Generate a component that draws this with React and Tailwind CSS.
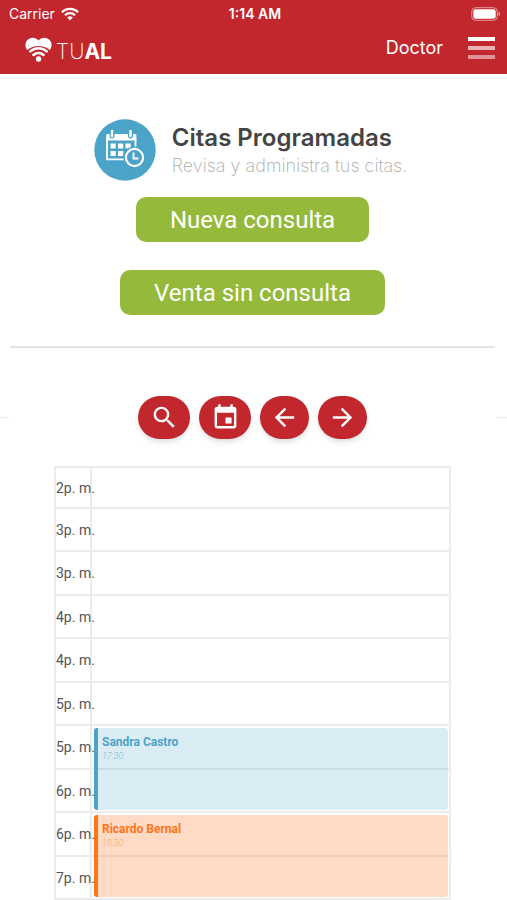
import React from "react";

const hours = ["2p. m.", "3p. m.", "3p. m.", "4p. m.", "4p. m.", "5p. m.", "5p. m.", "6p. m.", "6p. m.", "7p. m."];

const appointments = {
  6: { name: "Sandra Castro", time: "17:30", box: "border-[#4ba3c7] bg-[#4ba3c7]/20", title: "text-[#4ba3c7]", sub: "text-[#4ba3c7]/70" },
  8: { name: "Ricardo Bernal", time: "18:30", box: "border-[#ff7518] bg-[#ff6a13]/25", title: "text-[#ff7518]", sub: "text-[#ff7518]/60" },
};

const actions = [
  {
    label: "Buscar",
    size: "w-[52px]",
    path: "M15.5 14h-.79l-.28-.27A6.47 6.47 0 0 0 16 9.5 6.5 6.5 0 1 0 9.5 16c1.61 0 3.09-.59 4.23-1.57l.27.28v.79l5 4.99L20.49 19l-4.99-5zm-6 0C7.01 14 5 11.99 5 9.5S7.01 5 9.5 5 14 7.01 14 9.5 11.99 14 9.5 14z",
  },
  {
    label: "Calendario",
    size: "w-[52px]",
    path: "M17 12h-5v5h5v-5zM16 1v2H8V1H6v2H5c-1.11 0-1.99.9-1.99 2L3 19a2 2 0 0 0 2 2h14c1.1 0 2-.9 2-2V5c0-1.1-.9-2-2-2h-1V1h-2zm3 18H5V8h14v11z",
  },
  { label: "Anterior", size: "w-[49px]", path: "M20 11H7.83l5.59-5.59L12 4l-8 8 8 8 1.41-1.41L7.83 13H20v-2z" },
  { label: "Siguiente", size: "w-[49px]", path: "M12 4l-1.41 1.41L16.17 11H4v2h12.17l-5.58 5.59L12 20l8-8z" },
];

function WifiIcon() {
  return (
    <svg viewBox="0 0 18 14" className="h-[14px] w-[18px]" fill="none" stroke="white" strokeWidth="2.2" aria-hidden="true">
      <path d="M0.9 5.2a11.6 11.6 0 0 1 16.2 0" />
      <path d="M3.9 8.3a7.3 7.3 0 0 1 10.2 0" />
      <path d="M9 13.4 6.2 10.6a4 4 0 0 1 5.6 0z" fill="white" stroke="none" />
    </svg>
  );
}

function BatteryIcon() {
  return (
    <svg viewBox="0 0 30 14" className="h-[14px] w-[30px]" aria-hidden="true">
      <rect x="0.7" y="0.7" width="25.6" height="12.6" rx="3.8" fill="none" stroke="#e79a9d" strokeWidth="1" />
      <rect x="2.3" y="2.3" width="22.4" height="9.4" rx="2.3" fill="white" />
      <path d="M27.6 4.8v4.4c1-.4 1.6-1.2 1.6-2.2s-.6-1.8-1.6-2.2z" fill="#e79a9d" />
    </svg>
  );
}

function HeartLogo() {
  return (
    <svg viewBox="0 0 27 25" className="h-[25px] w-[27px]" aria-hidden="true">
      <path d="M2.3 13C-.3 10 0 5.500 2.200 3.200 5-.3 10.500-.2 13.500 3.400 16.500-.2 22-.3 24.800 3.200 27 5.500 27.300 10 24.700 13 18.500 7.600 8.500 7.600 2.300 13z" fill="white" />
      <g fill="none" stroke="white" strokeWidth="2.500" strokeLinecap="round">
        <path d="M5.300 14.400a12 12 0 0 1 16.400 0" />
        <path d="M8.400 18a7.500 7.500 0 0 1 10.200 0" />
      </g>
      <circle cx="13.500" cy="22" r="2.700" fill="white" />
    </svg>
  );
}

function AppointmentsIcon() {
  return (
    <svg viewBox="0 0 62 62" className="size-[62px] shrink-0" aria-hidden="true">
      <circle cx="31" cy="31" r="30.700" fill="#4ba3c7" />
      <path d="M13 20v20.300h20M41.500 20v8" fill="none" stroke="white" strokeWidth="1.800" strokeLinejoin="round" />
      <path d="M13.600 15h27.300a1.500 1.500 0 0 1 1.500 1.500v5H12.100v-5a1.500 1.500 0 0 1 1.500-1.500z" fill="white" />
      <g stroke="#4ba3c7" strokeWidth="5" strokeLinecap="round">
        <path d="M18 12.500v4.500M36.500 12.500v4.500" />
      </g>
      <g stroke="white" strokeWidth="2.400" strokeLinecap="round">
        <path d="M18 12v5M36.500 12v5" />
      </g>
      <g fill="white">
        <rect x="16.500" y="24.500" width="5.200" height="5" />
        <rect x="24" y="24.500" width="5.200" height="5" />
        <rect x="31.500" y="24.500" width="5.200" height="5" />
        <rect x="16.500" y="32" width="5.200" height="5" />
        <rect x="24" y="32" width="5.200" height="5" />
      </g>
      <circle cx="40.500" cy="38.500" r="11" fill="#4ba3c7" />
      <circle cx="40.500" cy="38.500" r="8.600" fill="none" stroke="white" strokeWidth="2.200" />
      <path d="M39.500 33.500v6h5" fill="none" stroke="white" strokeWidth="1.900" />
    </svg>
  );
}

function Header() {
  return (
    <header className="bg-[#c1272d] pb-3 text-white">
      <div className="grid h-7 grid-cols-3 items-center pr-[6px] pl-[9px] text-sm">
        <div className="flex items-center gap-[6px]">
          <span>Carrier</span>
          <WifiIcon />
        </div>
        <span className="text-center font-semibold">1:14 AM</span>
        <div className="flex justify-end">
          <BatteryIcon />
        </div>
      </div>
      <div className="flex h-[34px] items-end justify-between pr-3 pl-[25px]">
        <a href="#inicio" className="flex items-end gap-1" aria-label="TUAL">
          <HeartLogo />
          <span className="text-[21px] leading-5 font-extralight">TU<b className="font-bold">AL</b></span>
        </a>
        <div className="flex items-center gap-[25px]">
          <span className="text-lg">Doctor</span>
          <button type="button" aria-label="Menú" className="flex w-[27px] flex-col gap-[5px]">
            <span className="h-1 w-full bg-white" />
            <span className="h-1 w-full bg-white/65" />
            <span className="h-1 w-full bg-white/50" />
          </button>
        </div>
      </div>
    </header>
  );
}

function Schedule() {
  return (
    <table className="w-full table-fixed border-separate border-spacing-0 border-r-2 border-b-2 border-[#ececec] font-['Roboto',sans-serif]">
      <colgroup>
        <col className="w-9" />
        <col />
      </colgroup>
      <tbody>
        {hours.map((hour, i) => {
          const item = appointments[i];
          return (
            <tr key={i} className="h-[44px] first:h-[41px] even:h-[43px]">
              <th scope="row" className="relative z-20 border-t-2 border-l-2 border-[#ececec] p-0 text-left text-sm leading-5 font-normal whitespace-nowrap text-[#555]">
                {hour}
              </th>
              <td className="relative border-t-2 border-l-2 border-[#ececec] p-0">
                {item && (
                  <div className={"absolute top-0.5 right-px left-0.5 z-10 h-[82px] rounded-[3px] border-l-4 px-1 py-1 " + item.box}>
                    <p className={"text-xs leading-5 font-bold " + item.title}>{item.name}</p>
                    <p className={"text-[9px] leading-2 font-light italic " + item.sub}>{item.time}</p>
                  </div>
                )}
              </td>
            </tr>
          );
        })}
      </tbody>
    </table>
  );
}

export default function App() {
  return (
    <div className="min-h-screen bg-white font-['Inter',sans-serif]">
      <Header />
      <main>
        <section className="mr-3 ml-[10px] flex flex-col items-center border-b-2 border-[#e4e4e4] pt-[45px] pb-[31px]">
          <div className="flex items-center gap-4 pr-1">
            <AppointmentsIcon />
            <div className="pt-1">
              <h1 className="text-2xl leading-7 font-semibold text-[#444]">Citas Programadas</h1>
              <p className="text-lg leading-7 font-extralight text-[#aaa]">Revisa y administra tus citas.</p>
            </div>
          </div>
          <button type="button" className="mt-4 h-[45px] rounded-[10px] bg-[#95ba3b] px-[34px] font-['Roboto',sans-serif] text-2xl text-white">
            Nueva consulta
          </button>
          <button type="button" className="mt-7 h-[45px] rounded-[10px] bg-[#95ba3b] px-[34px] font-['Roboto',sans-serif] text-2xl text-white">
            Venta sin consulta
          </button>
        </section>
        <div className="mt-12 flex items-center justify-between">
          <span className="h-px w-[9px] bg-[#eee]" />
          <div className="flex gap-[9px]">
            {actions.map((a) => (
              <button key={a.label} type="button" aria-label={a.label} className={"flex h-[43px] items-center justify-center rounded-full bg-[#c1272d] shadow-md " + a.size}>
                <svg viewBox="0 0 24 24" className="size-[29px]" fill="white" aria-hidden="true">
                  <path d={a.path} />
                </svg>
              </button>
            ))}
          </div>
          <span className="h-px w-[11px] bg-[#eee]" />
        </div>
        <section className="mt-[27px] mr-14 ml-[54px]">
          <Schedule />
        </section>
      </main>
    </div>
  );
}
